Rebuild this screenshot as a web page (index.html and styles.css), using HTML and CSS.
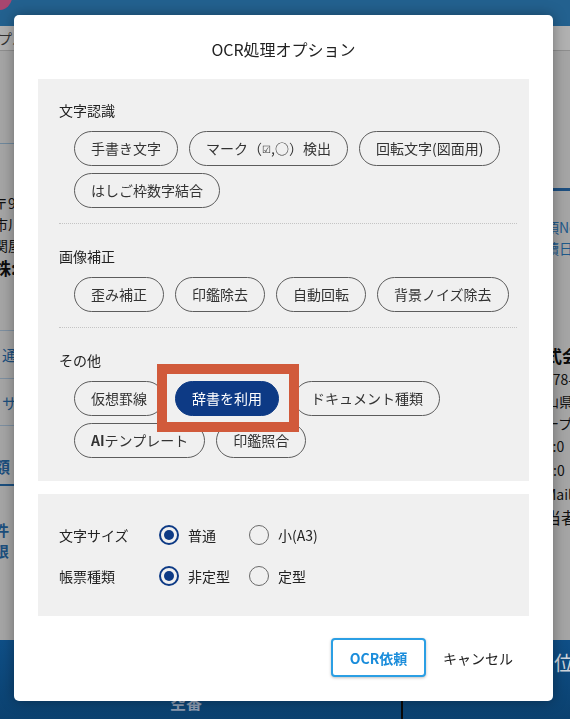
FILE: index.html
```html
<!DOCTYPE html>
<html lang="ja">
<head>
<meta charset="utf-8">
<title>OCR処理オプション</title>
<link rel="stylesheet" href="styles.css">
</head>
<body>
<div class="page">
  <header class="topbar"><span class="avatar"></span></header>
  <div class="subbar"><span class="sub-text">プル</span></div>
  <main class="content">
    <div class="col-left">
      <div class="rule"></div>
      <div class="addr">
        <p class="cut">〒9</p>
        <p class="cut">市川</p>
        <p class="cut">関屋</p>
        <p class="cut strong">株:</p>
      </div>
      <div class="links">
        <p class="link">通</p>
        <p class="link">サ</p>
      </div>
      <p class="amount cut">額</p>
      <div class="notes">
        <p class="cut">件</p>
        <p class="cut">限</p>
      </div>
    </div>
    <div class="col-right">
      <div class="blue-rule"></div>
      <div class="meta">
        <p>項No</p>
        <p>續日</p>
      </div>
      <div class="company">
        <p class="strong">式会</p>
        <p>678-</p>
        <p>山県</p>
        <p>ープ</p>
        <p class="tall">L:0</p>
        <p class="tall">X:0</p>
        <p class="tall">Mail</p>
        <p class="big">当者</p>
      </div>
    </div>
  </main>
  <footer class="bottombar">
    <span class="bottom-label">空番<br>出力</span>
    <span class="divider-v"></span>
    <span class="bottom-right">位</span>
  </footer>
</div>

<div class="backdrop">
  <section class="modal">
    <h1 class="modal-title">OCR処理オプション</h1>

    <div class="panel options">
      <div class="section">
        <h2 class="section-label">文字認識</h2>
        <div class="chips">
          <button class="chip">手書き文字</button>
          <button class="chip">マーク（<span class="mini">☑</span>,○）検出</button>
          <button class="chip">回転文字(図面用)</button>
          <button class="chip">はしご枠数字結合</button>
        </div>
      </div>
      <div class="section">
        <h2 class="section-label">画像補正</h2>
        <div class="chips">
          <button class="chip">歪み補正</button>
          <button class="chip">印鑑除去</button>
          <button class="chip">自動回転</button>
          <button class="chip">背景ノイズ除去</button>
        </div>
      </div>
      <div class="section">
        <h2 class="section-label">その他</h2>
        <div class="chips">
          <button class="chip">仮想罫線</button>
          <button class="chip is-selected is-highlighted">辞書を利用</button>
          <button class="chip">ドキュメント種類</button>
          <button class="chip"><b>AI</b>テンプレート</button>
          <button class="chip">印鑑照合</button>
        </div>
      </div>
    </div>

    <div class="panel settings">
      <span class="setting-label">文字サイズ</span>
      <label class="radio"><span class="dot checked"></span>普通</label>
      <label class="radio"><span class="dot"></span>小(A3)</label>
      <span class="setting-label">帳票種類</span>
      <label class="radio"><span class="dot checked"></span>非定型</label>
      <label class="radio"><span class="dot"></span>定型</label>
    </div>

    <div class="actions">
      <button class="btn-primary">OCR依頼</button>
      <button class="btn-text">キャンセル</button>
    </div>
  </section>
</div>
</body>
</html>
```
FILE: styles.css
```css
* { box-sizing: border-box; }
html, body { margin: 0; padding: 0; }
body {
  width: 570px;
  height: 719px;
  overflow: hidden;
  position: relative;
  background: #a5a5a5;
  font-family: "Noto Sans CJK JP", "Noto Sans", sans-serif;
  color: #222;
}
p { margin: 0; }

/* ---------- dimmed page behind the dialog ---------- */
.page {
  display: flex;
  flex-direction: column;
  height: 719px;
}
.topbar {
  flex: none;
  height: 26px;
  background: #23618f;
  position: relative;
  overflow: hidden;
}
.avatar {
  position: absolute;
  left: -14px;
  top: -16px;
  width: 26px;
  height: 26px;
  border-radius: 50%;
  background: #a8466f;
}
.subbar {
  flex: none;
  height: 25px;
  background: #b1b1b1;
  border-bottom: 1px solid #8e8e8e;
  display: flex;
  align-items: center;
}
.sub-text {
  margin-left: -2px;
  font-size: 14px;
  color: #333;
}
.content {
  flex: 1;
  display: flex;
  justify-content: space-between;
  background: #a5a5a5;
  overflow: hidden;
}
.col-left {
  width: 60px;
  flex: none;
  font-size: 14px;
  color: #111;
}
.rule {
  height: 93px;
  border-bottom: 1px solid #6f889c;
}
.addr {
  margin-top: 49px;
  line-height: 21px;
}
.cut { margin-left: -6px; }
.strong { font-weight: 700; font-size: 17px; line-height: 24px; color: #0c0c0c; }
.links {
  margin-top: 50px;
  border-top: 1px solid #7d8fa0;
}
.link {
  height: 48px;
  display: flex;
  align-items: center;
  border-bottom: 1px solid #7d8fa0;
  color: #1c4f7e;
  font-size: 15px;
  padding-left: 2px;
}
.link + .link { height: 47px; }
.amount {
  margin-top: 28px;
  font-size: 16px;
  font-weight: 700;
  line-height: 24px;
  color: #1c4f7e;
  padding-bottom: 6px;
  border-bottom: 2px solid #1c4f7e;
  margin-left: -6px;
}
.notes {
  margin-top: 33px;
  line-height: 21px;
  font-size: 15px;
  font-weight: 700;
  color: #1c4f7e;
}
.col-right {
  width: 30px;
  flex: none;
  margin-right: -5px;
  font-size: 14px;
  color: #111;
  margin-left: auto;
}
.blue-rule {
  margin-top: 137px;
  height: 3px;
  background: #1d4f80;
  width: 40px;
  margin-left: -10px;
}
.meta {
  margin-top: 26px;
  line-height: 21px;
  color: #1f5a8b;
  white-space: nowrap;
}
.company {
  margin-top: 85px;
  line-height: 22px;
  white-space: nowrap;
}
.company .tall { line-height: 24px; }
.company .big { font-size: 16px; }
.bottombar {
  flex: none;
  height: 79px;
  background: linear-gradient(180deg, #0f4f87, #0b416f);
  display: flex;
  padding-left: 170px;
  overflow: hidden;
}
.bottom-label {
  width: 231px;
  padding-top: 50px;
  font-size: 16px;
  font-weight: 700;
  line-height: 24px;
  color: #8c9bb0;
}
.divider-v {
  width: 2px;
  margin-top: 42px;
  background: #0a0a0a;
}
.bottom-right {
  margin-left: auto;
  margin-right: -4px;
  padding-top: 8px;
  font-size: 20px;
  color: #cfd5dc;
}

/* ---------- dialog ---------- */
.backdrop {
  position: fixed;
  inset: 0;
  display: flex;
  align-items: flex-start;
  padding: 15px 0 0 14px;
}
.modal {
  width: 539px;
  background: #fff;
  border-radius: 5px;
  box-shadow: 0 0 14px rgba(0, 0, 0, 0.35);
  padding: 22px 24px 24px;
}
.modal-title {
  margin: 0 0 18px;
  text-align: center;
  font-size: 16px;
  font-weight: 400;
  line-height: 24px;
  color: #222;
}
.panel {
  background: #f0f0f0;
}
.options {
  padding: 0 12px 0 21px;
}
.section {
  padding: 22px 0 15px;
}
.section:first-child { padding-top: 21px; }
.section + .section { border-top: 1px dotted #c4c4c4; }
.section:last-child { padding-bottom: 23px; }
.section-label {
  margin: 0 0 11px;
  font-size: 14px;
  font-weight: 400;
  line-height: 20px;
  color: #222;
}
.chips {
  display: flex;
  flex-wrap: wrap;
  gap: 7px 11px;
  padding-left: 15px;
}
.chip {
  font-family: inherit;
  font-size: 14px;
  line-height: 21px;
  color: #333;
  background: transparent;
  border: 1px solid #5c5c5c;
  border-radius: 18px;
  padding: 6px 16px;
  margin: 0;
  white-space: nowrap;
}
.chip b { font-weight: 700; }
.mini { font-size: 10px; vertical-align: 1px; }
.chip.is-selected {
  background: #0d3a85;
  border-color: #0d3a85;
  color: #fff;
  margin-right: 4px;
}
.chip.is-highlighted { position: relative; }
.chip.is-highlighted::after {
  content: "";
  position: absolute;
  top: -18px;
  bottom: -17px;
  left: -19px;
  right: -21px;
  border: 10px solid #d15a3b;
  z-index: 2;
  pointer-events: none;
}

.settings {
  margin-top: 13px;
  padding: 31px 21px 30px;
  display: grid;
  grid-template-columns: 100px 90px auto;
  grid-auto-rows: 20px;
  row-gap: 21px;
  align-items: center;
}
.setting-label {
  font-size: 14px;
  line-height: 20px;
  color: #222;
}
.radio {
  display: flex;
  align-items: center;
  gap: 9px;
  font-size: 14px;
  line-height: 20px;
  color: #222;
}
.dot {
  width: 20px;
  height: 20px;
  border-radius: 50%;
  border: 1.5px solid #6a6a6a;
  display: flex;
  align-items: center;
  justify-content: center;
  flex: none;
}
.dot.checked {
  border: 2.5px solid #0d3a85;
}
.dot.checked::before {
  content: "";
  width: 10px;
  height: 10px;
  border-radius: 50%;
  background: #0d3a85;
}

.actions {
  margin-top: 22px;
  display: flex;
  justify-content: flex-end;
}
.btn-primary {
  width: 95px;
  height: 39px;
  font-family: inherit;
  font-size: 14px;
  font-weight: 700;
  color: #1b8ddb;
  background: #fff;
  border: 2px solid #2b9fe4;
  border-radius: 4px;
  box-shadow: 0 1px 3px rgba(0, 0, 0, 0.25);
  padding: 0;
}
.btn-text {
  height: 39px;
  font-family: inherit;
  font-size: 14px;
  color: #222;
  background: none;
  border: none;
  padding: 0 16px 0 17px;
}
```
